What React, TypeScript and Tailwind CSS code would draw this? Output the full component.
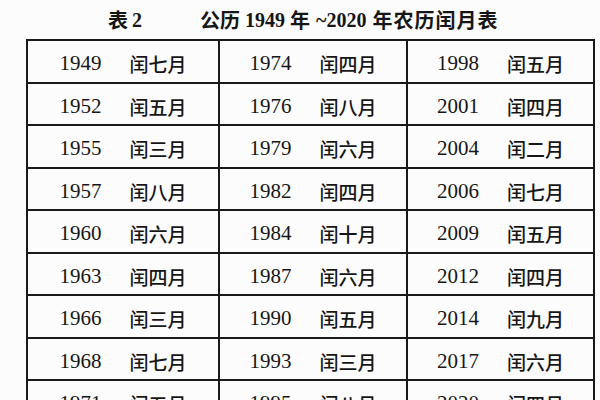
const rows: [string, string][][] = [
  [['1949', '闰七月'], ['1974', '闰四月'], ['1998', '闰五月']],
  [['1952', '闰五月'], ['1976', '闰八月'], ['2001', '闰四月']],
  [['1955', '闰三月'], ['1979', '闰六月'], ['2004', '闰二月']],
  [['1957', '闰八月'], ['1982', '闰四月'], ['2006', '闰七月']],
  [['1960', '闰六月'], ['1984', '闰十月'], ['2009', '闰五月']],
  [['1963', '闰四月'], ['1987', '闰六月'], ['2012', '闰四月']],
  [['1966', '闰三月'], ['1990', '闰五月'], ['2014', '闰九月']],
  [['1968', '闰七月'], ['1993', '闰三月'], ['2017', '闰六月']],
  [['1971', '闰五月'], ['1995', '闰八月'], ['2020', '闰四月']],
]

const serif = "font-['Liberation_Serif','Noto_Sans_CJK_SC',serif]"
const cjk = "font-['Noto_Sans_CJK_SC',sans-serif]"

export default function App() {
  return (
    <div className="w-[600px] h-[400px] overflow-hidden bg-[#fcfcfc] text-[#161616]">
      {/* 标题 */}
      <div className={`flex items-center h-[39px] pl-[108px] pt-[1px] text-[20px] font-bold ${serif}`}>
        <span className={cjk}>表</span>
        <span className="ml-[4px]">2</span>
        <span className={`ml-[58px] ${cjk}`}>公历</span>
        <span className="ml-[5px]">1949</span>
        <span className={`ml-[5px] ${cjk}`}>年</span>
        <span className="ml-[6px]">~2020</span>
        <span className={`ml-[6px] tracking-[1px] ${cjk}`}>年农历闰月表</span>
      </div>

      {/* 表格 */}
      <table className="ml-[26px] w-[567px] border-collapse border-2 border-[#1a1a1a] table-fixed">
        <colgroup>
          <col className="w-[192px]" />
          <col className="w-[188px]" />
          <col className="w-[187px]" />
        </colgroup>
        <tbody>
          {rows.map((row, i) => (
            <tr key={i} className="h-[42.5px]">
              {row.map(([year, month], j) => (
                <td key={j} className="border-2 border-[#1a1a1a] p-0">
                  <div className="flex items-center justify-center gap-[28px] pt-[5px]">
                    <span className={`text-[21px] leading-none ${serif}`}>{year}</span>
                    <span className={`text-[19px] leading-none font-medium ${cjk}`}>{month}</span>
                  </div>
                </td>
              ))}
            </tr>
          ))}
        </tbody>
      </table>
    </div>
  )
}
